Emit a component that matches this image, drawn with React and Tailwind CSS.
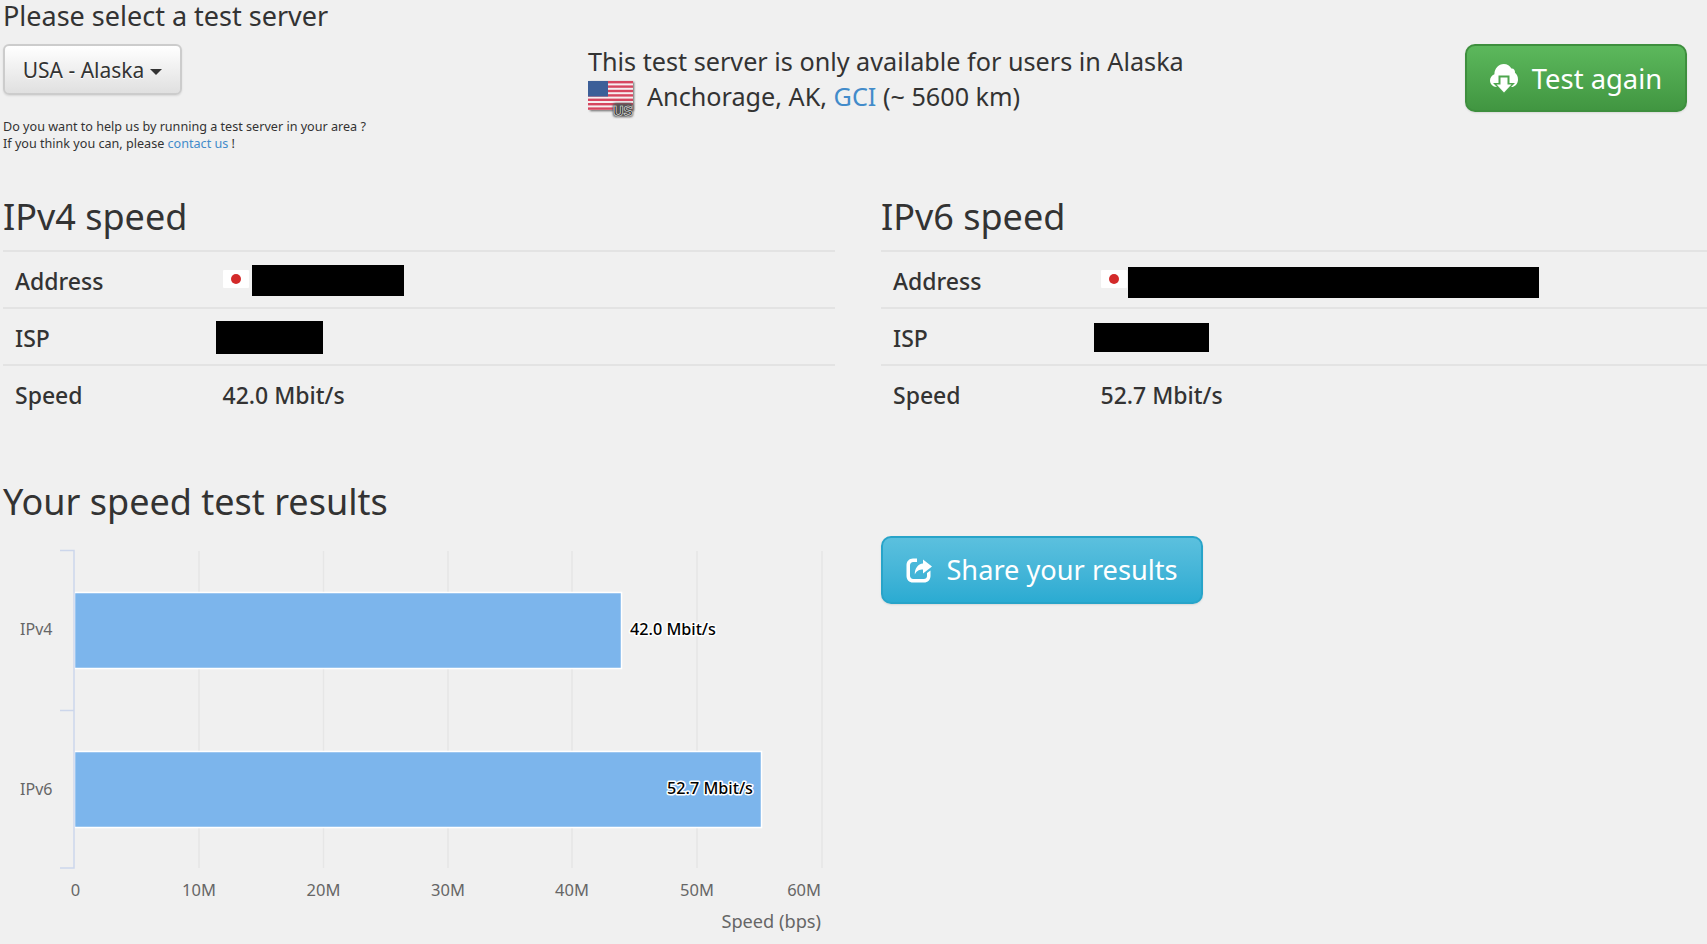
import React from "react";

function UsFlag() {
  return (
    <svg width="50" height="40" viewBox="0 0 50 40" className="mt-[5px] shrink-0">
      <defs>
        <filter id="fs" x="-20%" y="-20%" width="140%" height="140%"><feGaussianBlur stdDeviation="1.3" /></filter>
        <filter id="fb" x="-20%" y="-20%" width="140%" height="140%"><feGaussianBlur stdDeviation="0.9" /></filter>
      </defs>
      <rect x="2" y="3" width="44" height="29" fill="#666" filter="url(#fs)" />
      <rect x="0" y="2" width="45" height="29" fill="#f6eef0" />
      {[0, 1, 2, 3, 4, 5, 6].map((i) => (
        <rect key={i} x="0" y={2 + i * 4.4} width="45" height="2.4" fill="#d6465f" />
      ))}
      <rect x="0" y="2" width="20" height="15.5" fill="#3c5f98" />
      <rect x="25" y="24" width="20" height="14" rx="3" fill="#555" filter="url(#fb)" />
      <text x="35" y="36.5" textAnchor="middle" fontSize="14" fontWeight="700" fontFamily="'Liberation Sans',sans-serif" fill="#2a2a2a" stroke="#f0f0f0" strokeWidth="0.6">US</text>
    </svg>
  );
}

function JpFlag() {
  return (
    <span className="-mt-[2px] inline-flex h-[18px] w-[26px] shrink-0 items-center justify-center rounded-[1px] bg-white">
      <span className="block h-[10px] w-[10px] rounded-full bg-[#d32a2a]" />
    </span>
  );
}

function CloudIcon() {
  return (
    <svg width="28" height="31" viewBox="0 0 28 31" className="-mt-[2px] shrink-0">
      <path d="M6.5 24 C2.8 24 0 21 0 17.5 C0 14.6 1.8 12.2 4.4 11.2 C4.4 5.5 8.6 1 13.8 1 C17.2 1 20 2.8 21.4 5.6 C23.8 5.4 25.2 7.2 25 9.8 C26.8 11 28 13.6 28 16.4 C28 20.6 25 24 21 24 Z" fill="#fff" />
      <path d="M8.5 12.5 H19.5 V20 H25 L14 31 L3 20 H8.5 Z" fill="#4ea64e" />
      <path d="M10.5 14.5 H17.5 V21.5 H21.5 L14 29.5 L6.5 21.5 H10.5 Z" fill="#fff" />
    </svg>
  );
}

function ShareIcon() {
  return (
    <svg width="26" height="25" viewBox="0 0 26 25" className="shrink-0">
      <path d="M21 15 V18 C21 19.8 19.6 21 17.8 21 H7.2 C5.4 21 4 19.6 4 17.8 V7.2 C4 5.4 5.4 4 7.2 4 H11 V0.5 H7 C3.2 0.5 0.5 3.4 0.5 7 V18 C0.5 21.8 3.2 24.5 7 24.5 H18 C21.8 24.5 24.5 21.8 24.5 18 V12.5 Z" fill="#fff" />
      <path d="M17 1.5 L26 8.5 L17 15.5 V11.5 C13.5 11.5 10.5 12.5 8.8 16.5 C8.6 10.5 12 6 17 5.5 Z" fill="#fff" />
    </svg>
  );
}

function SpeedTable({ title, addrW, addrH, addrMl, addrMt, ispW, ispH, speed }) {
  return (
    <div>
      <h2 className="h-[52px] text-[36px] leading-[38px] font-normal text-[#333]">{title}</h2>
      <div className="text-[23px] font-medium text-[#333]">
        <div className="flex h-[57px] items-center border-t-2 border-[#e3e3e3] pl-[12px]">
          <span className="mt-[3px] w-[208px] shrink-0">Address</span>
          <JpFlag />
          <span className="block bg-black" style={{ width: addrW, height: addrH, marginLeft: addrMl, marginTop: addrMt }} />
        </div>
        <div className="flex h-[57px] items-center border-t-2 border-[#e3e3e3] pl-[12px]">
          <span className="mt-[3px] w-[201px] shrink-0">ISP</span>
          <span className="mt-[2px] block bg-black" style={{ width: ispW, height: ispH }} />
        </div>
        <div className="flex h-[57px] items-center border-t-2 border-[#e3e3e3] pl-[12px]">
          <span className="mt-[3px] w-[207.5px] shrink-0">Speed</span>
          <span className="mt-[3px]">{speed}</span>
        </div>
      </div>
    </div>
  );
}

function Chart() {
  const xs = [75.5, 199, 323.5, 448, 572, 697, 822];
  const labels = ["0", "10M", "20M", "30M", "40M", "50M", "60M"];
  return (
    <svg width="832" height="404" viewBox="0 540 832 404" className="mt-[18px] -ml-[3px] block" fontFamily="'Noto Sans',sans-serif">
      {xs.slice(1).map((x) => (
        <line key={x} x1={x} x2={x} y1="551" y2="868" stroke="#e6e6e6" strokeWidth="1.5" />
      ))}
      <rect x="74.5" y="592.5" width="547" height="76" fill="#7cb5ec" stroke="#fff" strokeWidth="1.5" />
      <rect x="74.5" y="751.5" width="687" height="76" fill="#7cb5ec" stroke="#fff" strokeWidth="1.5" />
      <path d="M60 550.5 H74 V868 H60 M60 710.5 H74" fill="none" stroke="#ccd6eb" strokeWidth="1.5" />
      <text x="52.5" y="635" textAnchor="end" fontSize="16" fill="#666">IPv4</text>
      <text x="52.5" y="795" textAnchor="end" fontSize="16" fill="#666">IPv6</text>
      {xs.map((x, i) => (
        <text key={x} x={i === 6 ? 821 : x} y="896" textAnchor={i === 6 ? "end" : "middle"} fontSize="16.5" fill="#666">
          {labels[i]}
        </text>
      ))}
      <text x="821" y="928" textAnchor="end" fontSize="18.2" fill="#666">Speed (bps)</text>
      <text x="630" y="635" fontSize="16.2" fontWeight="500" fill="#000" stroke="#fff" strokeWidth="3" strokeLinejoin="round" paintOrder="stroke">42.0 Mbit/s</text>
      <text x="753" y="794" textAnchor="end" fontSize="16.2" fontWeight="500" fill="#000" stroke="#fff" strokeWidth="3" strokeLinejoin="round" paintOrder="stroke">52.7 Mbit/s</text>
    </svg>
  );
}

export default function App() {
  return (
    <div className="h-[944px] w-[1707px] overflow-hidden bg-[#f0f0f0] pl-[3px] font-['Noto_Sans',sans-serif] text-[#333]">
      <div className="flex h-[198px]">
        <div className="w-[585px] shrink-0">
          <h3 className="text-[27px] leading-[32px] font-normal">Please select a test server</h3>
          <button className="mt-[12px] flex h-[51px] w-[179px] items-center justify-center rounded-[6px] border-2 border-[#ccc] bg-gradient-to-b from-white to-[#e0e0e0] pt-[2px] text-[21px] text-[#333] shadow-[0_1px_2px_rgba(0,0,0,0.1)] [text-shadow:0_1px_0_#fff]">
            USA - Alaska
            <span className="mt-[2px] ml-[6px] block h-0 w-0 border-x-[6px] border-t-[6px] border-x-transparent border-t-[#333]" />
          </button>
          <p className="mt-[23px] text-[12.6px] leading-[17px]">
            Do you want to help us by running a test server in your area ?<br />
            If you think you can, please <a className="text-[#428bca]">contact us</a> !
          </p>
        </div>
        <div className="w-[877px] shrink-0 pt-[44px] text-[25.2px] leading-[35px]">
          <div>This test server is only available for users in Alaska</div>
          <div className="flex h-[35px] items-center">
            <UsFlag />
            <span className="ml-[9px]">
              Anchorage, AK, <a className="text-[#428bca]">GCI</a> (~ 5600 km)
            </span>
          </div>
        </div>
        <div className="pt-[44px]">
          <button className="flex h-[68px] w-[222px] items-center justify-center gap-[14px] rounded-[10px] border-2 border-[#3e8f3e] bg-gradient-to-b from-[#5cb85c] to-[#419641] pt-[2px] text-[27.4px] text-white shadow-[0_1px_2px_rgba(0,0,0,0.1)]">
            <CloudIcon />
            Test again
          </button>
        </div>
      </div>
      <div className="grid grid-cols-[832px_826px] gap-x-[46px]">
        <SpeedTable title="IPv4 speed" addrW={152} addrH={31} addrMl={3} addrMt={2} ispW={107} ispH={33} speed="42.0 Mbit/s" />
        <SpeedTable title="IPv6 speed" addrW={411} addrH={31} addrMl={1} addrMt={6} ispW={115} ispH={29} speed="52.7 Mbit/s" />
      </div>
      <div className="grid grid-cols-[832px_826px] gap-x-[46px]">
        <div>
          <h2 className="mt-[61px] h-[40px] text-[36px] leading-[40px] font-normal">Your speed test results</h2>
          <Chart />
        </div>
        <div>
          <button className="mt-[115px] flex h-[68px] w-[322px] items-center justify-center gap-[14px] rounded-[10px] border-2 border-[#28a4c9] bg-gradient-to-b from-[#5bc0de] to-[#2aabd2] text-[27.2px] text-white shadow-[0_1px_2px_rgba(0,0,0,0.1)]">
            <ShareIcon />
            Share your results
          </button>
        </div>
      </div>
    </div>
  );
}
